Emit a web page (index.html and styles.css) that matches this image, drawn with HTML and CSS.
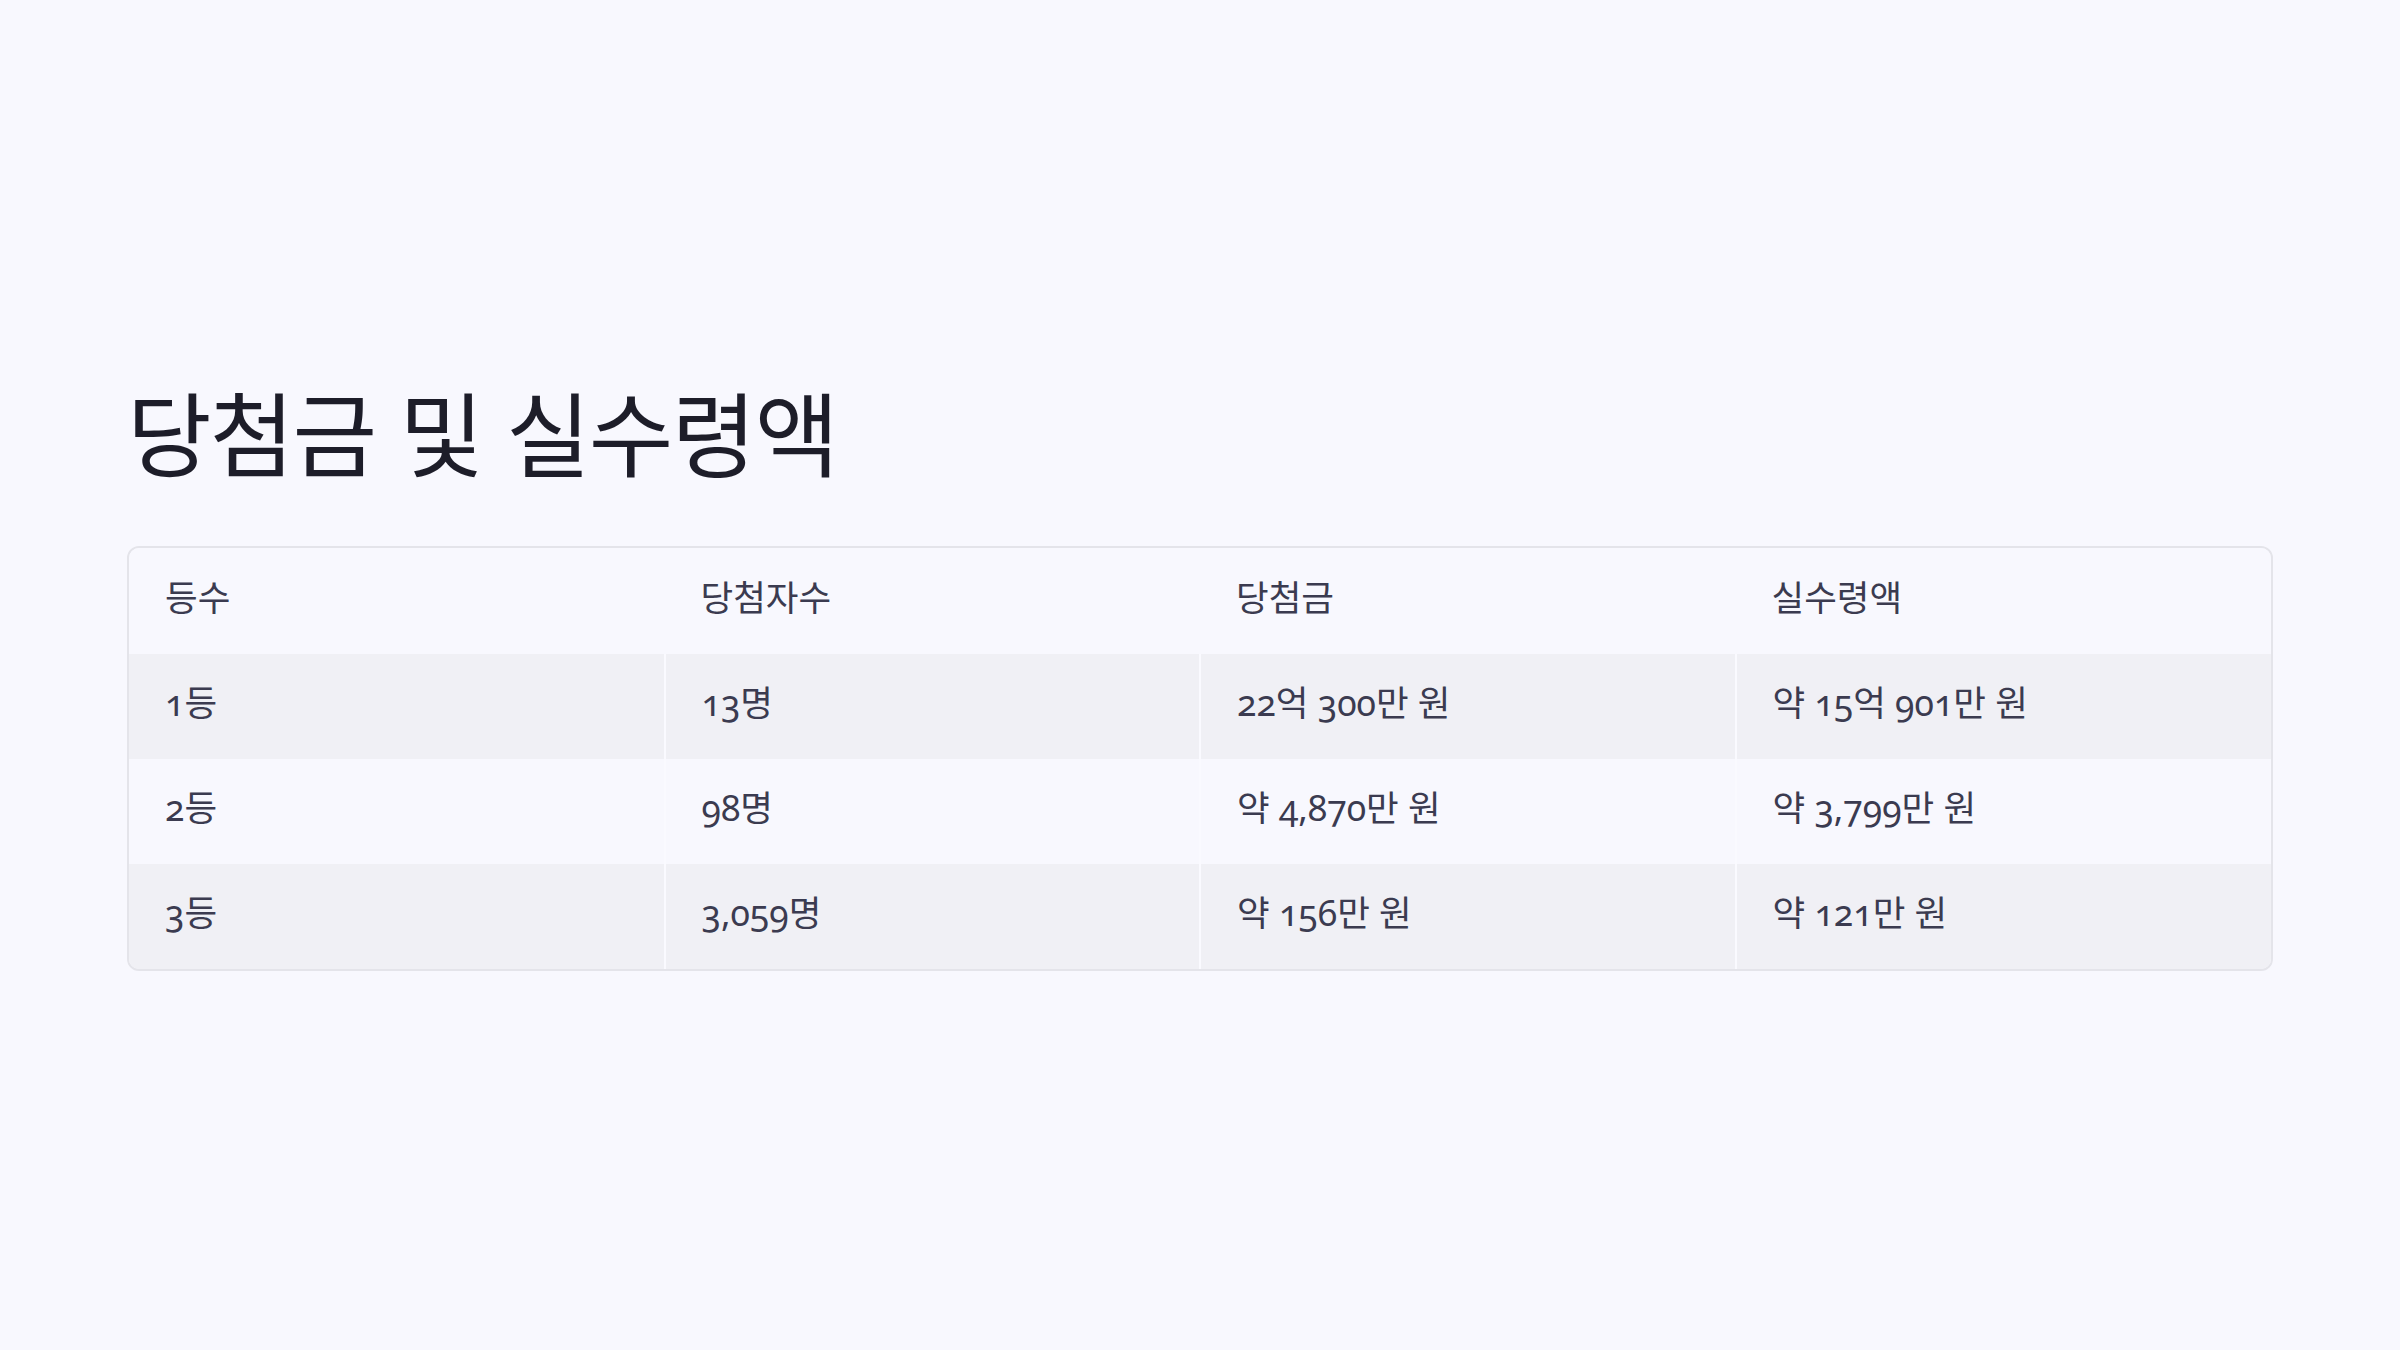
FILE: index.html
```html
<!DOCTYPE html>
<html lang="ko">
<head>
<meta charset="utf-8">
<link rel="stylesheet" href="styles.css">
</head>
<body>
<main class="slide">
  <h1 class="title">당첨금 및 실수령액</h1>
  <div class="table-wrap">
    <table class="prize">
      <thead>
        <tr><th>등수</th><th>당첨자수</th><th>당첨금</th><th>실수령액</th></tr>
      </thead>
      <tbody>
        <tr class="alt"><td>1등</td><td>13명</td><td>22억 300만 원</td><td>약 15억 901만 원</td></tr>
        <tr><td>2등</td><td>98명</td><td>약 4,870만 원</td><td>약 3,799만 원</td></tr>
        <tr class="alt"><td>3등</td><td>3,059명</td><td>약 156만 원</td><td>약 121만 원</td></tr>
      </tbody>
    </table>
  </div>
</main>
</body>
</html>
```
FILE: styles.css
```css
html, body {
  margin: 0;
  padding: 0;
  background: #f8f8fe;
}
body {
  font-family: "Noto Sans CJK KR", "Noto Sans", sans-serif;
  color: #3b3b50;
}
.slide {
  width: 2400px;
  height: 1350px;
  box-sizing: border-box;
  padding: 375px 127px 0 127px;
}
.title {
  margin: 0 0 61px 0;
  font-size: 92px;
  font-weight: 400;
  line-height: 1.2;
  color: #1d1d29;
  letter-spacing: -0.02em;
}
.table-wrap {
  border: 2px solid #e4e4ea;
  border-radius: 12px;
  overflow: hidden;
}
.prize {
  width: 100%;
  border-collapse: collapse;
  table-layout: fixed;
  font-family: "Noto Sans", "Noto Sans CJK KR", sans-serif;
  font-variant-numeric: oldstyle-nums;
}
.prize th, .prize td {
  text-align: left;
  font-weight: 400;
  font-size: 35.5px;
  padding: 0 36px 12px 36px;
  color: #3b3b50;
}
.prize th {
  height: 94px;
  background: #f8f8fe;
}
.prize td {
  height: 93px;
}
.prize td + td {
  border-left: 2px solid #fafaff;
}
.prize tr.alt td {
  background: #f0f0f5;
}
```
